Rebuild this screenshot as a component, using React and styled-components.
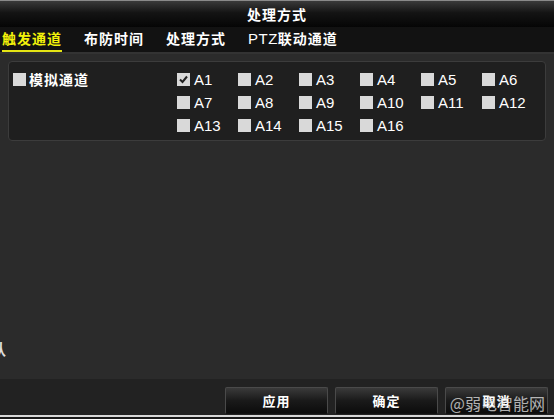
import styled, { createGlobalStyle } from "styled-components"

const Global = createGlobalStyle`
    html, body {
        margin: 0;
        padding: 0;
        background: #2b2b2b;
    }
`

const Window = styled.div`
    position: relative;
    width: 554px;
    height: 419px;
    display: flex;
    flex-direction: column;
    background: #2b2b2b;
    overflow: hidden;
    font-family: "Noto Sans CJK SC", "Liberation Sans", sans-serif;
    color: #fff;
`

const TitleBar = styled.div`
    height: 26px;
    border-top: 1px solid #8a8a8a;
    background: linear-gradient(#3a3a3a, #141414 45%, #050505);
    display: flex;
    align-items: center;
    justify-content: center;
    font-size: 14px;
    font-weight: 700;
    letter-spacing: 1px;
`

const TabBar = styled.div`
    height: 25px;
    background: #121212;
    border-bottom: 2px solid #333;
    display: flex;
    align-items: flex-end;
    gap: 22px;
    padding-left: 2px;
`

const Tab = styled.div`
    height: 23px;
    box-sizing: border-box;
    font-size: 14px;
    font-weight: 700;
    letter-spacing: 1px;
    line-height: 19px;
    color: ${props => props.active ? "#f2f20a" : "#fff"};
    border-bottom: 2px solid ${props => props.active ? "#e4e414" : "transparent"};
`

const Latin = styled.span`
    font-family: "Liberation Sans", sans-serif;
    font-weight: 400;
    font-size: 15px;
    letter-spacing: 0.5px;
`

const Body = styled.div`
    flex: 1;
    padding: 7px 8px 0;
`

const Panel = styled.div`
    height: 80px;
    box-sizing: border-box;
    border: 1px solid #3c3c3c;
    border-radius: 4px;
    background: #1f1f1f;
    display: flex;
    padding: 9px 0 0 4px;
`

const Group = styled.label`
    width: 164px;
    display: flex;
    align-items: flex-start;
    gap: 3px;
    font-size: 14px;
    font-weight: 700;
    letter-spacing: 1px;
    line-height: 17px;
`

const Grid = styled.div`
    display: grid;
    grid-template-columns: repeat(6, 61px);
    grid-auto-rows: 23px;
`

const Item = styled.label`
    display: flex;
    align-items: flex-start;
    gap: 4px;
    font-family: "Liberation Sans", sans-serif;
    font-size: 15px;
    line-height: 17px;
`

const Box = styled.span`
    width: 13px;
    height: 13px;
    margin-top: 2px;
    flex: none;
    background: #d9d9d9;
    display: flex;
    align-items: center;
    justify-content: center;
`

const Footer = styled.div`
    height: 38px;
    background: #222;
    border-bottom: 2px solid #d8d8d8;
    display: flex;
    justify-content: flex-end;
    align-items: flex-end;
    gap: 7px;
    padding-right: 6px;
    padding-bottom: 1px;
    box-sizing: border-box;
`

const Button = styled.div`
    width: 103px;
    height: 27px;
    box-sizing: border-box;
    border: 1px solid #4a4a4a;
    border-bottom-color: #111;
    border-radius: 2px;
    background: linear-gradient(#3a3a3a, #1a1a1a 50%, #0c0c0c);
    display: flex;
    align-items: center;
    justify-content: center;
    font-size: 13px;
    font-weight: 700;
    letter-spacing: 1px;
`

const Tail = styled.div`
    height: 2px;
    background: #1a1a1a;
`

const Edge = styled.div`
    position: absolute;
    left: -9px;
    top: 338px;
    font-size: 15px;
    font-weight: 700;
    color: #ddd;
`

const Watermark = styled.div`
    position: absolute;
    right: 9px;
    bottom: 4px;
    font-family: "Noto Sans CJK SC", sans-serif;
    font-size: 16px;
    color: rgba(230, 230, 230, 0.75);
`

const Check = () => (
    <svg width="11" height="11" viewBox="0 0 11 11">
        <path d="M2 5.5 L4.5 8 L9 2.5" stroke="#222" strokeWidth="2" fill="none" />
    </svg>
)

const channels = Array.from({ length: 16 }, (_, i) => `A${i + 1}`)

const App = () => {
    return (
        <Window>
            <Global />
            <TitleBar>处理方式</TitleBar>
            <TabBar>
                <Tab active>触发通道</Tab>
                <Tab>布防时间</Tab>
                <Tab>处理方式</Tab>
                <Tab><Latin>PTZ</Latin>联动通道</Tab>
            </TabBar>
            <Body>
                <Panel>
                    <Group>
                        <Box />
                        模拟通道
                    </Group>
                    <Grid>
                        {channels.map((c, i) => (
                            <Item key={c}>
                                <Box>{i === 0 && <Check />}</Box>
                                {c}
                            </Item>
                        ))}
                    </Grid>
                </Panel>
            </Body>
            <Footer>
                <Button>应用</Button>
                <Button>确定</Button>
                <Button>取消</Button>
            </Footer>
            <Tail />
            <Edge>认</Edge>
            <Watermark>@弱电智能网</Watermark>
        </Window>
    )
}

export default App
